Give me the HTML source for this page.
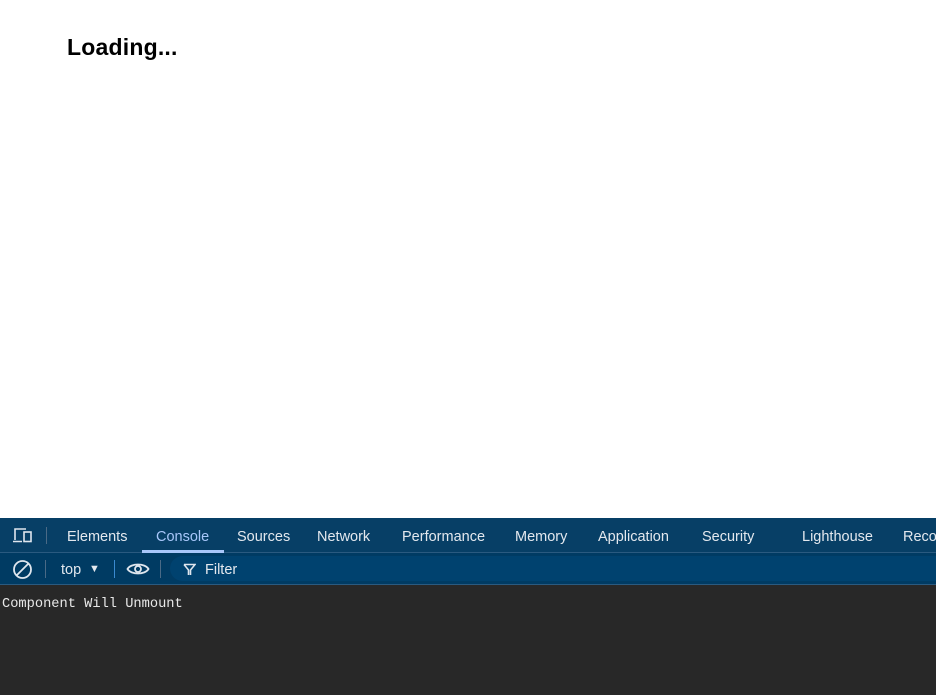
<!DOCTYPE html>
<html><head><meta charset="utf-8"><style>
*{margin:0;padding:0;box-sizing:border-box}
body{width:936px;height:695px;overflow:hidden;background:#fff;font-family:"Liberation Sans","DejaVu Sans",sans-serif;position:relative}
h1{position:absolute;left:67px;top:34px;font-size:23px;font-weight:bold;color:#000;letter-spacing:0.2px}
#tabs{position:absolute;left:0;top:518px;width:936px;height:35px;background:#073f66;border-bottom:1px solid #2a5a80}
.tab{position:absolute;top:11px;font-size:14.5px;color:#e3e8ee;white-space:nowrap}
#bar{position:absolute;left:0;top:553px;width:936px;height:32px;background:#003b63;border-bottom:1px solid #2a5a80}
#pill{position:absolute;left:170px;top:3px;width:780px;height:25px;border-radius:13px;background:#00426f}
#con{position:absolute;left:0;top:585px;width:936px;height:110px;background:#282828}
.sep{position:absolute;width:1px;background:#4a6a86}
</style></head><body>
<h1>Loading...</h1>
<div id="tabs">
<svg style="position:absolute;left:12px;top:9px" width="22" height="17" viewBox="0 0 22 17" fill="none" stroke="#dfe6ee" stroke-width="1.6"><path d="M3 13V2h11M1 14.5h9"/><rect x="12" y="5" width="7" height="9.5"/></svg>
<div class="sep" style="left:46px;top:9px;height:17px"></div>
<span class="tab" style="left:67px">Elements</span>
<span class="tab" style="left:156px;color:#a8c7fa">Console</span>
<div style="position:absolute;left:142px;top:32px;width:82px;height:3px;background:#a8c7fa"></div>
<span class="tab" style="left:237px">Sources</span>
<span class="tab" style="left:317px">Network</span>
<span class="tab" style="left:402px">Performance</span>
<span class="tab" style="left:515px">Memory</span>
<span class="tab" style="left:598px">Application</span>
<span class="tab" style="left:702px">Security</span>
<span class="tab" style="left:802px">Lighthouse</span>
<span class="tab" style="left:903px">Recorder</span>
</div>
<div id="bar">
<svg style="position:absolute;left:12px;top:6px" width="21" height="21" viewBox="0 0 21 21" fill="none" stroke="#dfe6ee" stroke-width="1.8"><circle cx="10.5" cy="10.5" r="8.5"/><path d="M4.5 16.5l12-12"/></svg>
<div class="sep" style="left:45px;top:7px;height:18px"></div>
<span style="position:absolute;left:61px;top:9px;font-size:14.5px;color:#e3e8ee">top</span>
<span style="position:absolute;left:89px;top:10px;font-size:11px;color:#e3e8ee">▼</span>
<div class="sep" style="left:114px;top:7px;height:18px;background:#3a8ad0"></div>
<svg style="position:absolute;left:126px;top:7px" width="24" height="18" viewBox="0 0 24 18" fill="none" stroke="#dfe6ee" stroke-width="1.8"><path d="M1.5 9C5 3 19 3 22.5 9C19 15 5 15 1.5 9Z"/><circle cx="12" cy="9" r="3"/></svg>
<div class="sep" style="left:160px;top:7px;height:18px"></div>
<div id="pill">
<svg style="position:absolute;left:13px;top:7px" width="13" height="13" viewBox="0 0 13 13" fill="none" stroke="#dfe6ee" stroke-width="1.6"><path d="M1 1.5h11L7.5 7v5M5.5 12V7L1 1.5"/></svg>
<span style="position:absolute;left:35px;top:6px;font-size:14.5px;color:#e3e8ee">Filter</span>
</div>
</div>
<div id="con"><span style="position:absolute;left:2px;top:12px;font-family:'Liberation Mono','DejaVu Sans Mono',monospace;font-size:13.7px;color:#e8e8e8">Component Will Unmount</span></div>
</body></html>
